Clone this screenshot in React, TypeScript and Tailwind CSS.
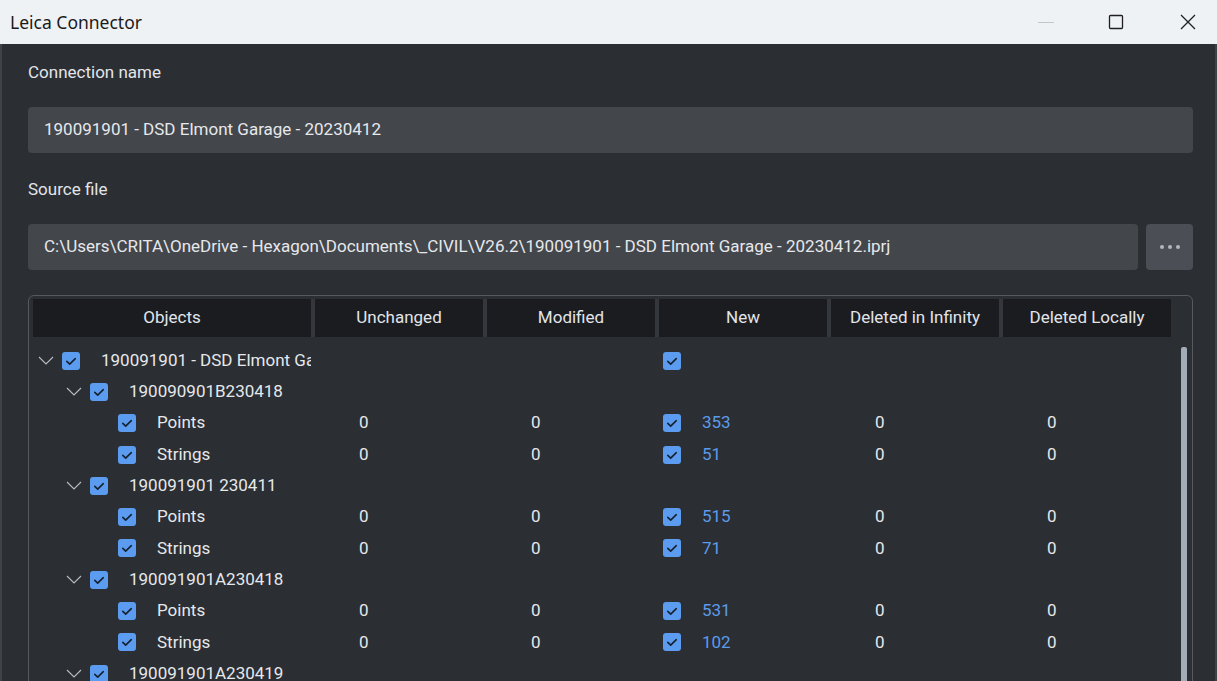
import type { ReactNode } from "react";

type Row = {
  level: 0 | 1 | 2;
  label: string;
  expandable?: boolean;
  values?: [string, string, string, string, string];
  newChecked?: boolean;
};

const rows: Row[] = [
  { level: 0, label: "190091901 - DSD Elmont Garage - 20230412", expandable: true, newChecked: true },
  { level: 1, label: "190090901B230418", expandable: true },
  { level: 2, label: "Points", values: ["0", "0", "353", "0", "0"], newChecked: true },
  { level: 2, label: "Strings", values: ["0", "0", "51", "0", "0"], newChecked: true },
  { level: 1, label: "190091901 230411", expandable: true },
  { level: 2, label: "Points", values: ["0", "0", "515", "0", "0"], newChecked: true },
  { level: 2, label: "Strings", values: ["0", "0", "71", "0", "0"], newChecked: true },
  { level: 1, label: "190091901A230418", expandable: true },
  { level: 2, label: "Points", values: ["0", "0", "531", "0", "0"], newChecked: true },
  { level: 2, label: "Strings", values: ["0", "0", "102", "0", "0"], newChecked: true },
  { level: 1, label: "190091901A230419", expandable: true },
];

const columns = ["Objects", "Unchanged", "Modified", "New", "Deleted in Infinity", "Deleted Locally"];

const indent = ["pl-[3px]", "pl-[31px]", "pl-[59px]"];

function CheckBox() {
  return (
    <span className="flex h-[18px] w-[18px] shrink-0 items-center justify-center rounded-[3px] bg-[#5b9cf0]">
      <svg viewBox="0 0 18 18" className="h-[18px] w-[18px]" fill="none">
        <path d="M4.8 9.4l2.9 2.7 5.6-5.4" stroke="#16202c" strokeWidth="1.6" strokeLinecap="round" strokeLinejoin="round" />
      </svg>
    </span>
  );
}

function Chevron() {
  return (
    <svg viewBox="0 0 16 9" className="ml-[2px] h-[9px] w-[16px]" fill="none">
      <path d="M1 1l7 7 7-7" stroke="#b9bec6" strokeWidth="1.1" />
    </svg>
  );
}

function Cell({ children }: { children?: ReactNode }) {
  return <div className="flex items-center pl-[44px]">{children}</div>;
}

export default function App() {
  return (
    <div className="h-[681px] w-[1217px] overflow-hidden bg-[#2b2e33] font-['Roboto',sans-serif] text-[17px] text-[#e6e8eb]">
      {/* title bar */}
      <div className="flex h-[44px] items-center justify-between bg-[#eff2f5] pl-[10px] pr-[21px]">
        <span className="font-['Noto_Sans',sans-serif] text-[17.5px] text-[#1a1a1a]">Leica Connector</span>
        <div className="flex items-center">
          <svg viewBox="0 0 16 16" className="h-4 w-4" fill="none">
            <path d="M0 8.5h16" stroke="#c3c7cc" strokeWidth="1" />
          </svg>
          <svg viewBox="0 0 16 16" className="ml-[54px] h-4 w-4" fill="none">
            <rect x="1.5" y="1.5" width="13" height="13" rx="1" stroke="#1f1f1f" strokeWidth="1.3" />
          </svg>
          <svg viewBox="0 0 16 16" className="ml-[56px] h-4 w-4" fill="none">
            <path d="M1 1l14 14M15 1L1 15" stroke="#1f1f1f" strokeWidth="1.3" />
          </svg>
        </div>
      </div>

      <div className="flex h-[637px] flex-col border-x-2 border-[#3f4247] pl-[26px] pt-[18px]">
        <div className="h-[20px] shrink-0 leading-[20px] text-[#e2e5e9]">Connection name</div>
        <div className="mt-[25px] flex h-[46px] w-[1165px] shrink-0 items-center rounded-[4px] bg-[#43464b] pl-[16px]">
          190091901 - DSD Elmont Garage - 20230412
        </div>

        <div className="mt-[26px] h-[20px] shrink-0 leading-[20px] text-[#e2e5e9]">Source file</div>
        <div className="mt-[25px] flex h-[46px] w-[1165px] shrink-0 gap-[8px]">
          <div className="flex flex-1 items-center whitespace-nowrap rounded-[4px] bg-[#43464b] pl-[16px]">
            C:\Users\CRITA\OneDrive - Hexagon\Documents\_CIVIL\V26.2\190091901 - DSD Elmont Garage - 20230412.iprj
          </div>
          <button className="flex w-[47px] items-center justify-center gap-[4px] rounded-[4px] bg-[#4b4e54]">
            <span className="h-[4px] w-[4px] rounded-full bg-[#b3b8c0]" />
            <span className="h-[4px] w-[4px] rounded-full bg-[#b3b8c0]" />
            <span className="h-[4px] w-[4px] rounded-full bg-[#b3b8c0]" />
          </button>
        </div>

        {/* table */}
        <div className="mt-[25px] flex w-[1165px] shrink-0 rounded-[6px] border border-[#56595e] pl-[4px] pr-[3px] pt-[3px]">
          <div className="w-[1138px]">
            <div className="grid h-[38px] grid-cols-[278px_168px_168px_168px_168px_168px] gap-x-[4px] bg-[#34373c]">
              {columns.map((c) => (
                <div key={c} className="flex items-center justify-center bg-[#1b1c20] text-[#e1e5ea]">
                  {c}
                </div>
              ))}
            </div>
            <div className="pt-[8px]">
              {rows.map((r, i) => (
                <div key={i} className="grid h-[31.3px] grid-cols-[278px_168px_168px_168px_168px_168px] gap-x-[4px]">
                  <div className={`flex items-center overflow-hidden whitespace-nowrap ${indent[r.level]}`}>
                    <span className="flex w-[26px] shrink-0 items-center">{r.expandable ? <Chevron /> : null}</span>
                    <CheckBox />
                    <span className="ml-[21px]">{r.label}</span>
                  </div>
                  <Cell>{r.values?.[0]}</Cell>
                  <Cell>{r.values?.[1]}</Cell>
                  <div className="flex items-center pl-[4px]">
                    {r.newChecked ? <CheckBox /> : null}
                    {r.values ? <span className="ml-[21px] text-[#5c9bea]">{r.values[2]}</span> : null}
                  </div>
                  <Cell>{r.values?.[3]}</Cell>
                  <Cell>{r.values?.[4]}</Cell>
                </div>
              ))}
            </div>
          </div>
          <div className="ml-[10px] pt-[48px]">
            <div className="h-[500px] w-[6px] rounded-t-[2px] bg-[#a3abb8]" />
          </div>
        </div>
      </div>
    </div>
  );
}
